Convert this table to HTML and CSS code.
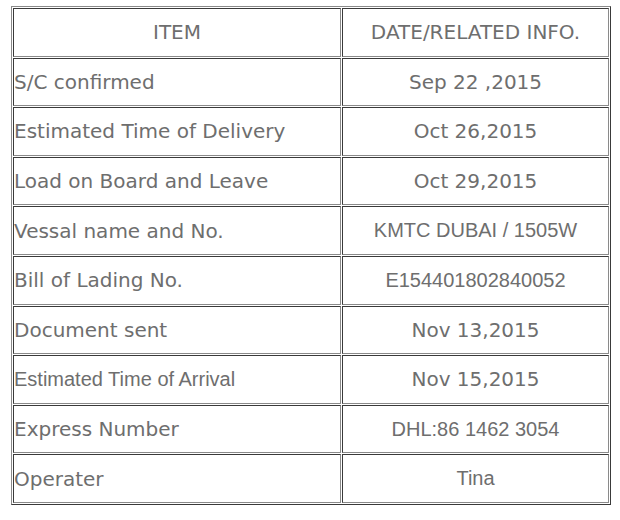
FILE: index.html
```html
<!DOCTYPE html>
<html>
<head>
<meta charset="utf-8">
<link rel="stylesheet" href="styles.css">
</head>
<body>
<table class="info">
  <tr><td class="item center">ITEM</td><td class="val">DATE/RELATED INFO.</td></tr>
  <tr><td class="item">S/C confirmed</td><td class="val">Sep 22 ,2015</td></tr>
  <tr><td class="item">Estimated Time of Delivery</td><td class="val">Oct 26,2015</td></tr>
  <tr><td class="item">Load on Board and Leave</td><td class="val">Oct 29,2015</td></tr>
  <tr><td class="item">Vessal name and No.</td><td class="val arial">KMTC DUBAI / 1505W</td></tr>
  <tr><td class="item">Bill of Lading No.</td><td class="val arial">E154401802840052</td></tr>
  <tr><td class="item">Document sent</td><td class="val">Nov 13,2015</td></tr>
  <tr><td class="item arial">Estimated Time of Arrival</td><td class="val">Nov 15,2015</td></tr>
  <tr><td class="item">Express Number</td><td class="val arial">DHL:86 1462 3054</td></tr>
  <tr><td class="item">Operater</td><td class="val arial">Tina</td></tr>
</table>
</body>
</html>
```

FILE: styles.css
```css
html, body {
  margin: 0;
  padding: 0;
  background: #ffffff;
}

body {
  padding: 6px 0 0 11px;
}

.info {
  width: 600px;
  border-collapse: separate;
  border-spacing: 1px;
  border-style: solid;
  border-width: 1px;
  border-color: #8a8a8a #3a3a3a #3a3a3a #8a8a8a;
  font-family: "DejaVu Sans", Verdana, sans-serif;
  font-size: 20px;
  color: #6e6e6e;
}

.info td {
  padding: 0;
  height: 46.6px;
  vertical-align: middle;
  border-style: solid;
  border-width: 1px;
  border-color: #3a3a3a #8a8a8a #8a8a8a #3a3a3a;
  white-space: nowrap;
}

.info td.item {
  width: 326px;
  text-align: left;
}

.info td.val {
  text-align: center;
}

.info td.center {
  text-align: center;
}

.info td.arial {
  font-family: "Liberation Sans", Arial, sans-serif;
}
```
